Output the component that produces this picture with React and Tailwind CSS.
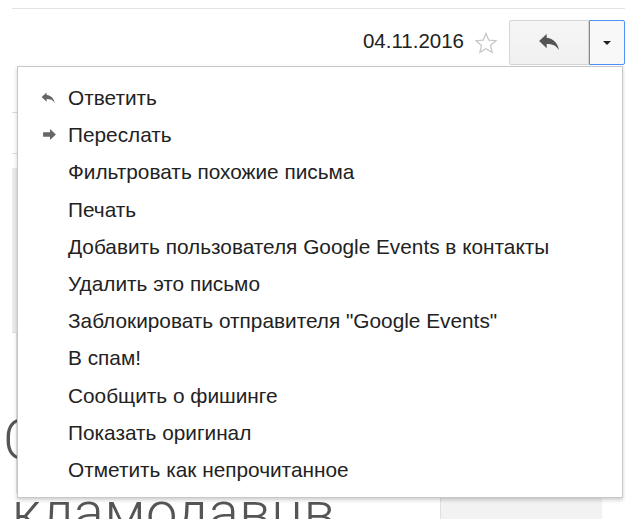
import React from 'react';

const ReplyIcon = ({ className }) => (
  <svg viewBox="0 0 24 18" className={className} fill="currentColor">
    <path d="M9 4V0L1 7.5 9 15v-4.3c6 0 10 1.6 13 6.3-1-6.2-5-12.2-13-13z" />
  </svg>
);

const ForwardIcon = ({ className }) => (
  <svg viewBox="0 0 14 12" className={className} fill="currentColor">
    <path d="M0 3.5h7.5V0L14 6l-6.5 6V8.5H0z" />
  </svg>
);

const StarIcon = ({ className }) => (
  <svg viewBox="0 0 24 24" className={className} fill="none" stroke="currentColor" strokeWidth="1.3">
    <path d="M12 2.5l2.8 6.6 7.1.6-5.4 4.7 1.6 7-6.1-3.7-6.1 3.7 1.6-7-5.4-4.7 7.1-.6z" />
  </svg>
);

const menuItems = [
  { label: 'Ответить', icon: 'reply' },
  { label: 'Переслать', icon: 'forward' },
  { label: 'Фильтровать похожие письма' },
  { label: 'Печать' },
  { label: 'Добавить пользователя Google Events в контакты' },
  { label: 'Удалить это письмо' },
  { label: 'Заблокировать отправителя "Google Events"' },
  { label: 'В спам!' },
  { label: 'Сообщить о фишинге' },
  { label: 'Показать оригинал' },
  { label: 'Отметить как непрочитанное' },
];

const MoreMenu = () => (
  <div className="absolute left-[17px] top-[66px] w-[606px] bg-white border border-[#c8c8c8] shadow-[0_2px_4px_rgba(0,0,0,0.2)] pt-[12px] pb-[9px]">
    {menuItems.map((item) => (
      <div key={item.label} className="flex items-center h-[37.2px] text-[20.8px] text-[#222]">
        <div className="w-[50px] flex justify-end pr-[12px] text-[#666]">
          {item.icon === 'reply' && <ReplyIcon className="w-[15px] h-[12px]" />}
          {item.icon === 'forward' && <ForwardIcon className="w-[13px] h-[11px]" />}
        </div>
        <span>{item.label}</span>
      </div>
    ))}
  </div>
);

export default function App() {
  return (
    <div
      className="relative w-[625px] h-[519px] overflow-hidden bg-white"
      style={{ fontFamily: '"Liberation Sans", Arial, sans-serif' }}
    >
      <div className="mt-[8px] ml-[12px] border-t border-[#e3e3e3]" />

      {/* message header: date, star, reply + more */}
      <div className="flex items-center justify-end mt-[11px] h-[45px]">
        <span className="text-[20.5px] text-[#222] leading-none mt-[-2px]">04.11.2016</span>
        <StarIcon className="w-[24px] h-[24px] ml-[10px] text-[#c8c8c8]" />
        <div className="flex ml-[11px] h-[45px]">
          <button className="w-[80px] h-full flex items-center justify-center border border-[#d6d6d6] bg-gradient-to-b from-[#f6f6f6] to-[#f0f0f0] rounded-l-[2px] text-[#555]">
            <ReplyIcon className="w-[23px] h-[17px]" />
          </button>
          <button className="w-[36px] h-full flex items-center justify-center border border-[#4d90fe] bg-[#f8f8f8] rounded-r-[2px]">
            <span className="w-0 h-0 border-l-[4px] border-r-[4px] border-t-[4px] border-l-transparent border-r-transparent border-t-[#222]" />
          </button>
        </div>
      </div>

      {/* page content behind the menu */}
      <div className="flex mt-[2px]">
        <div className="w-[17px] shrink-0 pl-[12px]">
          <div className="h-[45px]" />
          <div className="h-[41px] border-t border-[#ddd]" />
          <div className="h-[15px] border-t border-[#ddd]" />
          <div className="h-[165px] bg-[#ececec] border-b border-[#ddd]" />
          <div className="h-[160px] border-r border-[#e5e5e5]" />
        </div>
        <div className="flex-1" />
      </div>

      <div
        className="absolute left-[3px] top-[404px] text-[56px] leading-[72px] font-light text-[#555] whitespace-nowrap"
        style={{ fontFamily: 'Roboto, "Liberation Sans", sans-serif' }}
      >
        <div>Спасибо</div>
        <div className="pl-[9px] tracking-[0.6px]">кламодавцв</div>
      </div>

      <div className="absolute left-[440px] top-[497px] w-[162px] h-[30px] bg-[#f2f2f2] border-l border-[#e0e0e0]" />

      <MoreMenu />
    </div>
  );
}
